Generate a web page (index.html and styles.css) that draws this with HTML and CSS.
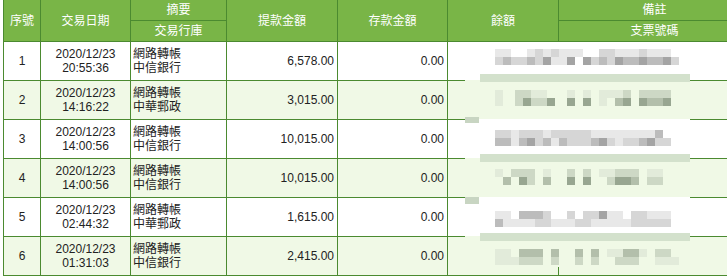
FILE: index.html
```html
<!DOCTYPE html>
<html lang="zh-Hant">
<head>
<meta charset="utf-8">
<title>交易明細</title>
<link rel="stylesheet" href="styles.css">
</head>
<body>
<div class="wrap">
  <table class="ledger">
    <colgroup>
      <col class="w-no"><col class="w-date"><col class="w-memo"><col class="w-out"><col class="w-in"><col class="w-bal"><col class="w-note">
    </colgroup>
    <thead>
      <tr class="h1">
        <th rowspan="2">序號</th>
        <th rowspan="2">交易日期</th>
        <th>摘要</th>
        <th rowspan="2">提款金額</th>
        <th rowspan="2">存款金額</th>
        <th rowspan="2">餘額</th>
        <th>備註</th>
      </tr>
      <tr class="h2">
        <th>交易行庫</th>
        <th>支票號碼</th>
      </tr>
    </thead>
    <tbody>
      <tr><td class="c">1</td><td class="c">2020/12/23<br>20:55:36</td><td class="l">網路轉帳<br>中信銀行</td><td class="r">6,578.00</td><td class="r">0.00</td><td></td><td></td></tr>
      <tr><td class="c">2</td><td class="c">2020/12/23<br>14:16:22</td><td class="l">網路轉帳<br>中華郵政</td><td class="r">3,015.00</td><td class="r">0.00</td><td></td><td></td></tr>
      <tr><td class="c">3</td><td class="c">2020/12/23<br>14:00:56</td><td class="l">網路轉帳<br>中信銀行</td><td class="r">10,015.00</td><td class="r">0.00</td><td></td><td></td></tr>
      <tr><td class="c">4</td><td class="c">2020/12/23<br>14:00:56</td><td class="l">網路轉帳<br>中信銀行</td><td class="r">10,015.00</td><td class="r">0.00</td><td></td><td></td></tr>
      <tr><td class="c">5</td><td class="c">2020/12/23<br>02:44:32</td><td class="l">網路轉帳<br>中華郵政</td><td class="r">1,615.00</td><td class="r">0.00</td><td></td><td></td></tr>
      <tr><td class="c">6</td><td class="c">2020/12/23<br>01:31:03</td><td class="l">網路轉帳<br>中信銀行</td><td class="r">2,415.00</td><td class="r">0.00</td><td></td><td></td></tr>
    </tbody>
  </table>

  <svg class="blur" width="225" height="225" viewBox="0 0 225 225" aria-hidden="true">
    <rect x="0" y="0" width="225" height="38" fill="#ffffff"/>
    <rect x="0" y="38" width="225" height="39" fill="#f0f9e6"/>
    <rect x="0" y="77" width="225" height="39" fill="#ffffff"/>
    <rect x="0" y="116" width="225" height="39" fill="#f0f9e6"/>
    <rect x="0" y="155" width="225" height="39" fill="#ffffff"/>
    <rect x="0" y="194" width="225" height="31" fill="#f0f9e6"/>

    <rect x="15" y="32" width="210" height="8" fill="#d3e1cc"/>
    <rect x="15" y="112" width="210" height="8" fill="#d3e1cc"/>
    <rect x="15" y="191" width="210" height="8" fill="#d3e1cc"/>
    <rect x="0" y="75" width="14" height="6" fill="#c8d5c2"/>
    <rect x="0" y="155" width="14" height="7" fill="#c8d5c2"/>

    <g transform="translate(0,7)">
      <rect x="30" y="0" width="16" height="8" fill="#e8e8e8"/>
      <rect x="62" y="0" width="8" height="8" fill="#e8e8e8"/>
      <rect x="70" y="0" width="8" height="8" fill="#d6d6d6"/>
      <rect x="78" y="0" width="8" height="8" fill="#e8e8e8"/>
      <rect x="86" y="0" width="8" height="8" fill="#d6d6d6"/>
      <rect x="94" y="0" width="24" height="8" fill="#e8e8e8"/>
      <rect x="134" y="0" width="16" height="8" fill="#d6d6d6"/>
      <rect x="150" y="0" width="24" height="8" fill="#e8e8e8"/>
      <rect x="174" y="0" width="8" height="8" fill="#d6d6d6"/>
      <rect x="182" y="0" width="24" height="8" fill="#e8e8e8"/>
      <rect x="30" y="8" width="8" height="8" fill="#d6d6d6"/>
      <rect x="38" y="8" width="8" height="8" fill="#bcbcbc"/>
      <rect x="46" y="8" width="16" height="8" fill="#d6d6d6"/>
      <rect x="62" y="8" width="8" height="8" fill="#bcbcbc"/>
      <rect x="70" y="8" width="8" height="8" fill="#d6d6d6"/>
      <rect x="78" y="8" width="8" height="8" fill="#a4a4a4"/>
      <rect x="86" y="8" width="16" height="8" fill="#e8e8e8"/>
      <rect x="102" y="8" width="8" height="8" fill="#a4a4a4"/>
      <rect x="118" y="8" width="8" height="8" fill="#a4a4a4"/>
      <rect x="126" y="8" width="8" height="8" fill="#d6d6d6"/>
      <rect x="134" y="8" width="8" height="8" fill="#bcbcbc"/>
      <rect x="142" y="8" width="8" height="8" fill="#d6d6d6"/>
      <rect x="150" y="8" width="8" height="8" fill="#a4a4a4"/>
      <rect x="158" y="8" width="16" height="8" fill="#bcbcbc"/>
      <rect x="174" y="8" width="8" height="8" fill="#a4a4a4"/>
      <rect x="182" y="8" width="16" height="8" fill="#bcbcbc"/>
      <rect x="198" y="8" width="8" height="8" fill="#a4a4a4"/>
      <rect x="206" y="8" width="8" height="8" fill="#d6d6d6"/>
    </g>

    <g transform="translate(0,48)">
      <rect x="30" y="0" width="8" height="8" fill="#e2ebda"/>
      <rect x="50" y="0" width="16" height="8" fill="#cdd8c5"/>
      <rect x="66" y="0" width="16" height="8" fill="#e2ebda"/>
      <rect x="102" y="0" width="8" height="8" fill="#e2ebda"/>
      <rect x="118" y="0" width="8" height="8" fill="#e2ebda"/>
      <rect x="134" y="0" width="24" height="8" fill="#e2ebda"/>
      <rect x="158" y="0" width="8" height="8" fill="#cdd8c5"/>
      <rect x="174" y="0" width="32" height="8" fill="#cdd8c5"/>
      <rect x="30" y="8" width="8" height="8" fill="#e2ebda"/>
      <rect x="50" y="8" width="8" height="8" fill="#cdd8c5"/>
      <rect x="58" y="8" width="8" height="8" fill="#98a691"/>
      <rect x="66" y="8" width="16" height="8" fill="#cdd8c5"/>
      <rect x="82" y="8" width="8" height="8" fill="#98a691"/>
      <rect x="102" y="8" width="8" height="8" fill="#98a691"/>
      <rect x="118" y="8" width="8" height="8" fill="#98a691"/>
      <rect x="134" y="8" width="8" height="8" fill="#e2ebda"/>
      <rect x="150" y="8" width="8" height="8" fill="#b3bfab"/>
      <rect x="158" y="8" width="8" height="8" fill="#98a691"/>
      <rect x="174" y="8" width="8" height="8" fill="#98a691"/>
      <rect x="182" y="8" width="16" height="8" fill="#b3bfab"/>
      <rect x="198" y="8" width="8" height="8" fill="#98a691"/>
    </g>

    <g transform="translate(0,88)">
      <rect x="30" y="0" width="16" height="8" fill="#d6d6d6"/>
      <rect x="46" y="0" width="8" height="8" fill="#e8e8e8"/>
      <rect x="54" y="0" width="24" height="8" fill="#d6d6d6"/>
      <rect x="78" y="0" width="8" height="8" fill="#e8e8e8"/>
      <rect x="86" y="0" width="40" height="8" fill="#d6d6d6"/>
      <rect x="126" y="0" width="64" height="8" fill="#e8e8e8"/>
      <rect x="190" y="0" width="8" height="8" fill="#bcbcbc"/>
      <rect x="30" y="8" width="16" height="8" fill="#bcbcbc"/>
      <rect x="46" y="8" width="8" height="8" fill="#e8e8e8"/>
      <rect x="54" y="8" width="8" height="8" fill="#bcbcbc"/>
      <rect x="62" y="8" width="8" height="8" fill="#a4a4a4"/>
      <rect x="70" y="8" width="8" height="8" fill="#d6d6d6"/>
      <rect x="78" y="8" width="8" height="8" fill="#bcbcbc"/>
      <rect x="86" y="8" width="8" height="8" fill="#e8e8e8"/>
      <rect x="94" y="8" width="8" height="8" fill="#bcbcbc"/>
      <rect x="102" y="8" width="24" height="8" fill="#d6d6d6"/>
      <rect x="126" y="8" width="8" height="8" fill="#bcbcbc"/>
      <rect x="134" y="8" width="8" height="8" fill="#a4a4a4"/>
      <rect x="142" y="8" width="8" height="8" fill="#d6d6d6"/>
      <rect x="150" y="8" width="8" height="8" fill="#e8e8e8"/>
      <rect x="158" y="8" width="16" height="8" fill="#d6d6d6"/>
      <rect x="174" y="8" width="8" height="8" fill="#bcbcbc"/>
      <rect x="182" y="8" width="8" height="8" fill="#a4a4a4"/>
      <rect x="190" y="8" width="16" height="8" fill="#d6d6d6"/>
    </g>

    <g transform="translate(0,127)">
      <rect x="30" y="0" width="8" height="8" fill="#e2ebda"/>
      <rect x="46" y="0" width="24" height="8" fill="#cdd8c5"/>
      <rect x="78" y="0" width="8" height="8" fill="#e2ebda"/>
      <rect x="102" y="0" width="8" height="8" fill="#cdd8c5"/>
      <rect x="118" y="0" width="8" height="8" fill="#cdd8c5"/>
      <rect x="134" y="0" width="16" height="8" fill="#e2ebda"/>
      <rect x="150" y="0" width="24" height="8" fill="#cdd8c5"/>
      <rect x="182" y="0" width="16" height="8" fill="#e2ebda"/>
      <rect x="38" y="8" width="8" height="8" fill="#b3bfab"/>
      <rect x="54" y="8" width="8" height="8" fill="#98a691"/>
      <rect x="62" y="8" width="8" height="8" fill="#cdd8c5"/>
      <rect x="78" y="8" width="8" height="8" fill="#b3bfab"/>
      <rect x="102" y="8" width="8" height="8" fill="#98a691"/>
      <rect x="118" y="8" width="8" height="8" fill="#98a691"/>
      <rect x="142" y="8" width="8" height="8" fill="#cdd8c5"/>
      <rect x="150" y="8" width="16" height="8" fill="#98a691"/>
      <rect x="166" y="8" width="8" height="8" fill="#b3bfab"/>
      <rect x="182" y="8" width="16" height="8" fill="#cdd8c5"/>
    </g>

    <g transform="translate(0,169)">
      <rect x="30" y="0" width="16" height="8" fill="#e8e8e8"/>
      <rect x="54" y="0" width="24" height="8" fill="#bcbcbc"/>
      <rect x="78" y="0" width="8" height="8" fill="#d6d6d6"/>
      <rect x="102" y="0" width="8" height="8" fill="#d6d6d6"/>
      <rect x="118" y="0" width="16" height="8" fill="#d6d6d6"/>
      <rect x="134" y="0" width="8" height="8" fill="#a4a4a4"/>
      <rect x="142" y="0" width="16" height="8" fill="#e8e8e8"/>
      <rect x="166" y="0" width="16" height="8" fill="#d6d6d6"/>
      <rect x="182" y="0" width="24" height="8" fill="#e8e8e8"/>
      <rect x="30" y="8" width="8" height="8" fill="#bcbcbc"/>
      <rect x="38" y="8" width="32" height="8" fill="#e8e8e8"/>
      <rect x="70" y="8" width="16" height="8" fill="#d6d6d6"/>
      <rect x="86" y="8" width="24" height="8" fill="#e8e8e8"/>
      <rect x="110" y="8" width="16" height="8" fill="#d6d6d6"/>
      <rect x="126" y="8" width="40" height="8" fill="#e8e8e8"/>
      <rect x="166" y="8" width="40" height="8" fill="#d6d6d6"/>
    </g>

    <g transform="translate(0,207)">
      <rect x="30" y="0" width="16" height="8" fill="#e2ebda"/>
      <rect x="54" y="0" width="24" height="8" fill="#b3bfab"/>
      <rect x="86" y="0" width="8" height="8" fill="#b3bfab"/>
      <rect x="110" y="0" width="8" height="8" fill="#b3bfab"/>
      <rect x="126" y="0" width="8" height="8" fill="#b3bfab"/>
      <rect x="142" y="0" width="16" height="8" fill="#e2ebda"/>
      <rect x="158" y="0" width="16" height="8" fill="#b3bfab"/>
      <rect x="174" y="0" width="8" height="8" fill="#e2ebda"/>
      <rect x="190" y="0" width="16" height="8" fill="#cdd8c5"/>
      <rect x="30" y="8" width="24" height="8" fill="#e2ebda"/>
      <rect x="54" y="8" width="24" height="8" fill="#cdd8c5"/>
      <rect x="86" y="8" width="8" height="8" fill="#cdd8c5"/>
      <rect x="110" y="8" width="8" height="8" fill="#cdd8c5"/>
      <rect x="126" y="8" width="8" height="8" fill="#cdd8c5"/>
      <rect x="150" y="8" width="24" height="8" fill="#cdd8c5"/>
      <rect x="190" y="8" width="24" height="8" fill="#e2ebda"/>
    </g>
  </svg>
</div>
</body>
</html>
```

FILE: styles.css
```css
html, body {
  margin: 0;
  background: #ffffff;
  overflow: hidden;
}

.wrap {
  position: relative;
  padding-left: 3px;
  font-family: "Liberation Sans", "Noto Sans CJK TC", sans-serif;
  font-size: 12px;
  color: #222222;
}

.ledger {
  border-collapse: collapse;
  table-layout: fixed;
  width: 747px;
}

.w-no { width: 37px; }
.w-date { width: 90px; }
.w-memo { width: 96px; }
.w-out { width: 111px; }
.w-in { width: 110px; }
.w-bal { width: 111px; }
.w-note { width: 192px; }

.ledger th {
  background: #79b547;
  color: #ffffff;
  font-weight: normal;
  border: 1px solid #4b8a30;
  border-top: none;
  padding: 0;
  line-height: 14px;
}

.h1 th { height: 20px; }
.h2 th { height: 20px; }

.ledger td {
  border: 1px solid #4b8a30;
  padding: 0;
  height: 38px;
  line-height: 14px;
  background: #ffffff;
}

.ledger tbody tr:nth-child(even) td {
  background: #f0f9e6;
}

.c { text-align: center; }
.l { text-align: left; padding-left: 2px !important; }
.r { text-align: right; padding-right: 3px !important; }

.blur {
  position: absolute;
  left: 465px;
  top: 42px;
  display: block;
}
```
